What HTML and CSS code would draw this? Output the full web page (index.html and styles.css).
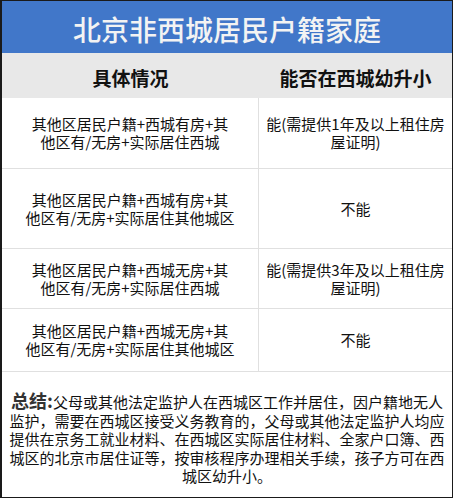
FILE: index.html
```html
<!DOCTYPE html>
<html lang="zh-CN">
<head>
<meta charset="utf-8">
<link rel="stylesheet" href="styles.css">
</head>
<body>
<div class="frame">
  <div class="title">北京非西城居民户籍家庭</div>
  <div class="grid">
    <div class="cell head left">具体情况</div>
    <div class="cell head">能否在西城幼升小</div>

    <div class="cell left">其他区居民户籍+西城有房+其<br>他区有/无房+实际居住西城</div>
    <div class="cell">能(需提供1年及以上租住房<br>屋证明)</div>

    <div class="cell left">其他区居民户籍+西城有房+其<br>他区有/无房+实际居住其他城区</div>
    <div class="cell">不能</div>

    <div class="cell left">其他区居民户籍+西城无房+其<br>他区有/无房+实际居住西城</div>
    <div class="cell">能(需提供3年及以上租住房<br>屋证明)</div>

    <div class="cell left">其他区居民户籍+西城无房+其<br>他区有/无房+实际居住其他城区</div>
    <div class="cell">不能</div>
  </div>
  <div class="summary"><span class="label">总结:</span>父母或其他法定监护人在西城区工作并居住，因户籍地无人<br>监护，需要在西城区接受义务教育的，父母或其他法定监护人均应<br>提供在京务工就业材料、在西城区实际居住材料、全家户口簿、西<br>城区的北京市居住证等，按审核程序办理相关手续，孩子方可在西<br>城区幼升小。</div>
</div>
</body>
</html>
```

FILE: styles.css
```css
* { box-sizing: border-box; }
html, body { margin: 0; padding: 0; background: #fff; }
body {
  font-family: "Noto Sans CJK SC", "Noto Sans", sans-serif;
  color: #111;
}
.frame {
  width: 453px;
  height: 498px;
  border: 1px solid #1a1a1a;
  border-left-width: 2px;
  display: flex;
  flex-direction: column;
  overflow: hidden;
}
.title {
  height: 52px;
  background: #4177c9;
  color: #f3f3f3;
  font-size: 28px;
  font-weight: 500;
  display: flex;
  align-items: center;
  justify-content: center;
  padding-top: 4px;
}
.grid {
  display: grid;
  grid-template-columns: 257px 1fr;
  grid-template-rows: 45px 71px 80px 60px 63px;
}
.cell {
  display: flex;
  align-items: center;
  justify-content: center;
  text-align: center;
  font-size: 15px;
  line-height: 18px;
  font-weight: 400;
  color: #111;
  border-bottom: 1px solid #e0e0e0;
  white-space: nowrap;
}
.cell.left { border-right: 1px solid #e0e0e0; }
.cell.head {
  background: #e8e8e8;
  font-size: 19px;
  font-weight: 700;
  border-bottom: none;
  padding-top: 4px;
}
.cell.head.left { border-right: none; }
.summary {
  flex: 1;
  text-align: center;
  font-size: 15px;
  line-height: 18.5px;
  font-weight: 400;
  padding: 19px 2px 0;
  white-space: nowrap;
}
.label {
  font-size: 18px;
  font-weight: 700;
  color: #333;
}
```
